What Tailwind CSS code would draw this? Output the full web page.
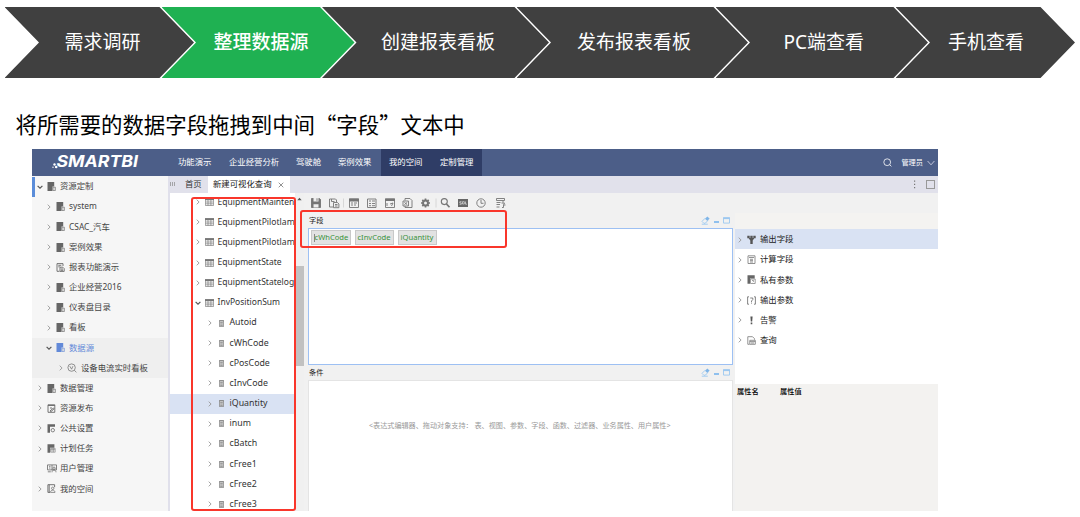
<!DOCTYPE html>
<html lang="zh-CN">
<head>
  <meta charset="UTF-8">
  <title>Smartbi</title>
  <script src="https://cdn.jsdelivr.net/npm/@tailwindcss/browser@4"></script>
</head>
<body class="w-[1080px] h-[517px] overflow-hidden bg-white font-['Noto_Sans','Noto_Sans_CJK_SC',sans-serif] text-[#333]">

  <!-- Icon sprite -->
  <svg class="hidden">
    <symbol id="right" viewBox="0 0 6 6"><path d="M1.7 .7 4.1 3 1.7 5.3" fill="none" stroke="#999" stroke-width=".9"/></symbol>
    <symbol id="down" viewBox="0 0 6 6"><path d="M.6 1.8 3 4.2 5.4 1.8" fill="none" stroke="#555" stroke-width="1.2"/></symbol>
    <symbol id="folder" viewBox="0 0 9 9"><path d="M.5 0h6.700v4.500H5.500V9H.5z" fill="currentColor"/><path d="M5.900 5.200h2.500v3.300H5.900z" fill="#ddd" stroke="currentColor" stroke-width=".6"/></symbol>
    <symbol id="report" viewBox="0 0 9 9"><path d="M1 8.300V.6h6v2.400M1 8.300h2.500M2.300 2.300h3M2.300 3.800h1.500M4 4.200h2.800l1.400 1.400v2.800H4zM5 6h2M5 7.300h2" fill="none" stroke="currentColor" stroke-width=".9"/></symbol>
    <symbol id="publish" viewBox="0 0 9 9"><path d="M1 8.300V.8h6.800v7.500zM1 1.500h6.800M3 4h2M3 7l3.400-3 .7.8-3 2.700z" fill="none" stroke="currentColor" stroke-width=".9"/></symbol>
    <symbol id="setting" viewBox="0 0 9 9"><path d="M.5.2h7.500v2.500H3v6H.5z" fill="currentColor"/><circle cx="5.800" cy="6.200" r="1.700" fill="none" stroke="currentColor" stroke-width=".8"/></symbol>
    <symbol id="plan" viewBox="0 0 9 9"><path d="M.5.2h6.900v3.500H3v5H.5z" fill="currentColor"/><path d="M3.500 4.400h4.700v3.800H3.500zM3.500 5.700h4.700M5 4.400v3.800M6.600 4.400v3.800" fill="none" stroke="currentColor" stroke-width=".5"/></symbol>
    <symbol id="users" viewBox="0 0 10 9"><path d="M.5.9h9v5h-9zM2 2.300h1.500M2 4h1.500M5 1v5M.8 7.800h3" fill="none" stroke="currentColor" stroke-width=".8"/><circle cx="7" cy="4.300" r="1.300" fill="#ccc" stroke="currentColor" stroke-width=".6"/><path d="M5 8.300c0-3 4-3 4 0" fill="none" stroke="currentColor" stroke-width=".7"/></symbol>
    <symbol id="space" viewBox="0 0 9 9"><path d="M3 8.400H.9V.7h6.700v2.500M2.200 .7v7.700" fill="none" stroke="currentColor" stroke-width=".9"/><circle cx="5.700" cy="4.300" r="1.200" fill="none" stroke="currentColor" stroke-width=".7"/><path d="M3.500 8.400c0-3 4.500-3 4.500 0z" fill="none" stroke="currentColor" stroke-width=".7"/></symbol>
    <symbol id="board" viewBox="0 0 10 10"><circle cx="4.600" cy="4.600" r="3.700" fill="none" stroke="currentColor" stroke-width=".8"/><path d="M2.800 3.200l1.800 3 1.300-3M7.300 7.300 9.400 9.300" fill="none" stroke="currentColor" stroke-width=".8"/></symbol>
    <symbol id="table" viewBox="0 0 9 8"><path d="M0 .2h9v2H0z" fill="#777"/><path d="M.4.5h8.200v7H.4zM3 2v5.500M5.900 2v5.500M.4 4h8.200M.4 5.800h8.200" fill="none" stroke="#777" stroke-width=".65"/></symbol>
    <symbol id="column" viewBox="0 0 5 7"><path d="M.4.4h4.200v6.200H.4z" fill="#ddd" stroke="#777" stroke-width=".7"/><path d="M.4 .9h4.200M1.200 2.600h2.600M1.200 4h2.600M1.200 5.400h2.600" stroke="#777" stroke-width=".7"/></symbol>
    <symbol id="eraser" viewBox="0 0 9 9"><path d="M4 2.700 6.300.5l2.300 2L6.400 5z" fill="#7fb5e8"/><path d="M4.200 2.200 1 5.400l2 2 1.600-.4 2.200-2.500M.8 8.200h6" fill="none" stroke="#9cc8f0" stroke-width=".9"/></symbol>
    <symbol id="max" viewBox="0 0 7 7"><path d="M.5.9h6v5.200h-6z" fill="none" stroke="#9cc8f0" stroke-width=".9"/><path d="M.1 .3h6.800v1.800H.1z" fill="#9cc8f0"/></symbol>
  </svg>

  <!-- Step bar -->
  <div class="flex h-[78px] pt-[7px] pl-[4.5px] text-[19px] leading-[71px] text-white whitespace-nowrap">
    <div class="w-[189.5px] h-[71px] shrink-0 pl-[60px] bg-[#404040] [clip-path:polygon(0_0,calc(100%_-_34.5px)_0,100%_50%,calc(100%_-_34.5px)_100%,0_100%,34.5px_50%)]">需求调研</div>
    <div class="w-[193px] h-[71px] shrink-0 -ml-[32.5px] pl-[52px] bg-[#1fb152] font-medium [clip-path:polygon(0_0,calc(100%_-_34.5px)_0,100%_50%,calc(100%_-_34.5px)_100%,0_100%,34.5px_50%)]">整理数据源</div>
    <div class="w-[227px] h-[71px] shrink-0 -ml-[32.5px] pl-[59px] bg-[#404040] [clip-path:polygon(0_0,calc(100%_-_34.5px)_0,100%_50%,calc(100%_-_34.5px)_100%,0_100%,34.5px_50%)]">创建报表看板</div>
    <div class="w-[231.5px] h-[71px] shrink-0 -ml-[32.5px] pl-[60.5px] bg-[#404040] [clip-path:polygon(0_0,calc(100%_-_34.5px)_0,100%_50%,calc(100%_-_34.5px)_100%,0_100%,34.5px_50%)]">发布报表看板</div>
    <div class="w-[212.5px] h-[71px] shrink-0 -ml-[32.5px] pl-[68px] bg-[#404040] [clip-path:polygon(0_0,calc(100%_-_34.5px)_0,100%_50%,calc(100%_-_34.5px)_100%,0_100%,34.5px_50%)]">PC端查看</div>
    <div class="w-[179.5px] h-[71px] shrink-0 -ml-[32.5px] pl-[52.5px] bg-[#404040] [clip-path:polygon(0_0,calc(100%_-_34.5px)_0,100%_50%,calc(100%_-_34.5px)_100%,0_100%,34.5px_50%)]">手机查看</div>
  </div>

  <h1 class="h-[71px] pl-[15.5px] pt-[30px] text-[21.4px] leading-[31px] text-black font-['Noto_Sans_CJK_SC',sans-serif] whitespace-nowrap">将所需要的数据字段拖拽到中间“字段”文本中</h1>

  <!-- Application window -->
  <div class="relative ml-8 w-[906px] h-[362px] flex flex-col overflow-hidden text-[8.4px] whitespace-nowrap">

    <!-- Top navigation -->
    <header class="flex h-[27px] shrink-0 items-center bg-[#4c5e88] text-white">
      <svg class="w-[110px] h-[27px] ml-[18px] shrink-0" viewBox="0 0 110 27">
        <text x="6.500" y="17.500" textLength="81.500" lengthAdjust="spacingAndGlyphs" font-family="Inter" font-size="16" font-weight="700" font-style="italic" fill="#fff">SMARTBI</text>
        <circle cx="4.500" cy="15.500" r="1.200" fill="#fff"/><circle cx="6.200" cy="18" r="1.300" fill="#fff"/><circle cx="3" cy="18.300" r=".7" fill="#fff"/>
      </svg>
      <span class="ml-[18px] w-[51px]">功能演示</span>
      <span class="w-[67px]">企业经营分析</span>
      <span class="w-[42px]">驾驶舱</span>
      <span class="w-[43px]">案例效果</span>
      <div class="flex h-full w-[101px] items-center bg-[#2f3d66] pl-2">
        <span class="w-[51px]">我的空间</span>
        <span>定制管理</span>
      </div>
      <svg class="ml-auto w-[9px] h-[9px]" viewBox="0 0 9 9"><path d="M6.700 6.700 8.400 8.400" stroke="#fff" stroke-width=".8"/><circle cx="4.200" cy="4.200" r="3.400" fill="none" stroke="#fff" stroke-width=".8"/></svg>
      <span class="ml-[9px] text-[7.2px]">管理员</span>
      <svg class="ml-1 mr-[3px] w-2 h-2" viewBox="0 0 8 8"><path d="M.6 2 4 5.800 7.400 2" fill="none" stroke="#dde" stroke-width=".8"/></svg>
    </header>

    <div class="flex grow min-h-0">
      <!-- Resource sidebar -->
      <aside class="w-[136px] shrink-0 bg-[#f6f6f6] pt-[0.5px] text-[#444]">
        <div class="flex h-[20.17px] items-center border-l-[3px] border-[#5b8dd9] pl-[2px]"><svg class="w-[6px] h-[6px]"><use href="#down"/></svg><svg class="ml-1 mr-[4px] w-[9px] h-[9px] text-[#666]"><use href="#folder"/></svg>资源定制</div>
        <div class="flex h-[20.17px] items-center pl-[14px]"><svg class="w-[6px] h-[6px]"><use href="#right"/></svg><svg class="ml-1 mr-[4px] w-[9px] h-[9px] text-[#666]"><use href="#folder"/></svg>system</div>
        <div class="flex h-[20.17px] items-center pl-[14px]"><svg class="w-[6px] h-[6px]"><use href="#right"/></svg><svg class="ml-1 mr-[4px] w-[9px] h-[9px] text-[#666]"><use href="#folder"/></svg>CSAC_汽车</div>
        <div class="flex h-[20.17px] items-center pl-[14px]"><svg class="w-[6px] h-[6px]"><use href="#right"/></svg><svg class="ml-1 mr-[4px] w-[9px] h-[9px] text-[#666]"><use href="#folder"/></svg>案例效果</div>
        <div class="flex h-[20.17px] items-center pl-[14px]"><svg class="w-[6px] h-[6px]"><use href="#right"/></svg><svg class="ml-1 mr-[4px] w-[9px] h-[9px] text-[#666]"><use href="#report"/></svg>报表功能演示</div>
        <div class="flex h-[20.17px] items-center pl-[14px]"><svg class="w-[6px] h-[6px]"><use href="#right"/></svg><svg class="ml-1 mr-[4px] w-[9px] h-[9px] text-[#666]"><use href="#folder"/></svg>企业经营2016</div>
        <div class="flex h-[20.17px] items-center pl-[14px]"><svg class="w-[6px] h-[6px]"><use href="#right"/></svg><svg class="ml-1 mr-[4px] w-[9px] h-[9px] text-[#666]"><use href="#folder"/></svg>仪表盘目录</div>
        <div class="flex h-[20.17px] items-center pl-[14px]"><svg class="w-[6px] h-[6px]"><use href="#right"/></svg><svg class="ml-1 mr-[4px] w-[9px] h-[9px] text-[#666]"><use href="#folder"/></svg>看板</div>
        <div class="flex h-[20.17px] items-center bg-[#efefef] pl-[14px] text-[#6289d8]"><svg class="w-[6px] h-[6px]"><use href="#down"/></svg><svg class="ml-1 mr-[4px] w-[9px] h-[9px]"><use href="#folder"/></svg>数据源</div>
        <div class="flex h-[20.17px] items-center bg-[#efefef] pl-[26px]"><svg class="w-[6px] h-[6px]"><use href="#right"/></svg><svg class="ml-[3px] mr-[4px] w-[10px] h-[10px] text-[#777]"><use href="#board"/></svg>设备电流实时看板</div>
        <div class="flex h-[20.17px] items-center pl-[5px]"><svg class="w-[6px] h-[6px]"><use href="#right"/></svg><svg class="ml-1 mr-[4px] w-[9px] h-[9px] text-[#666]"><use href="#folder"/></svg>数据管理</div>
        <div class="flex h-[20.17px] items-center pl-[5px]"><svg class="w-[6px] h-[6px]"><use href="#right"/></svg><svg class="ml-1 mr-[4px] w-[9px] h-[9px] text-[#666]"><use href="#publish"/></svg>资源发布</div>
        <div class="flex h-[20.17px] items-center pl-[5px]"><svg class="w-[6px] h-[6px]"><use href="#right"/></svg><svg class="ml-1 mr-[4px] w-[9px] h-[9px] text-[#666]"><use href="#setting"/></svg>公共设置</div>
        <div class="flex h-[20.17px] items-center pl-[5px]"><svg class="w-[6px] h-[6px]"><use href="#right"/></svg><svg class="ml-1 mr-[4px] w-[9px] h-[9px] text-[#666]"><use href="#plan"/></svg>计划任务</div>
        <div class="flex h-[20.17px] items-center pl-[15px]"><svg class="mr-[3px] w-[10px] h-[9px] text-[#666]"><use href="#users"/></svg>用户管理</div>
        <div class="flex h-[20.17px] items-center pl-[5px]"><svg class="w-[6px] h-[6px]"><use href="#right"/></svg><svg class="ml-1 mr-[4px] w-[9px] h-[9px] text-[#666]"><use href="#space"/></svg>我的空间</div>
      </aside>

      <div class="flex grow flex-col min-w-0 border-l-2 border-[#e0e0eb]">
        <!-- Tabs -->
        <div class="flex h-[17px] shrink-0 items-center bg-[#e1e1eb]">
          <svg class="w-[5px] h-[5px] mr-[10px]" viewBox="0 0 5 5"><path d="M.5 0v4M2.500 0v4M4.500 0v4" stroke="#888" stroke-width=".7"/></svg>
          <span class="w-[23px]">首页</span>
          <div class="flex h-full w-[82px] items-center bg-white pl-[5px] text-[#222]">
            <span>新建可视化查询</span>
            <svg class="ml-[6px] w-[6px] h-[6px]" viewBox="0 0 6 6"><path d="M.7.7l4.600 4.600M5.300.7.7 5.300" stroke="#777" stroke-width=".8"/></svg>
          </div>
          <svg class="ml-auto w-[3px] h-[9px] mr-[10px]" viewBox="0 0 3 9"><path d="M1 .5h1.200v1.200H1zM1 3.800h1.200V5H1zM1 7.100h1.200v1.200H1z" fill="#777"/></svg>
          <div class="mr-[3px] h-[9px] w-[9px] border border-[#999]"></div>
        </div>

        <div class="flex grow min-h-0">
          <!-- Table tree -->
          <div class="w-[125px] shrink-0 overflow-hidden bg-white text-[8.8px]">
            <div class="-mt-px">
              <div class="flex h-[20.17px] items-center pl-[25px]"><svg class="w-[6px] h-[6px] shrink-0"><use href="#right"/></svg><svg class="ml-1 mr-[3.5px] w-[9px] h-[8px] shrink-0"><use href="#table"/></svg><span class="text-[8.5px]">EquipmentMainten</span></div>
              <div class="flex h-[20.17px] items-center pl-[25px]"><svg class="w-[6px] h-[6px] shrink-0"><use href="#right"/></svg><svg class="ml-1 mr-[3.5px] w-[9px] h-[8px] shrink-0"><use href="#table"/></svg><span class="text-[8.6px]">EquipmentPilotlam</span></div>
              <div class="flex h-[20.17px] items-center pl-[25px]"><svg class="w-[6px] h-[6px] shrink-0"><use href="#right"/></svg><svg class="ml-1 mr-[3.5px] w-[9px] h-[8px] shrink-0"><use href="#table"/></svg><span class="text-[8.6px]">EquipmentPilotlam</span></div>
              <div class="flex h-[20.17px] items-center pl-[25px]"><svg class="w-[6px] h-[6px] shrink-0"><use href="#right"/></svg><svg class="ml-1 mr-[3.5px] w-[9px] h-[8px] shrink-0"><use href="#table"/></svg><span class="text-[8.5px]">EquipmentState</span></div>
              <div class="flex h-[20.17px] items-center pl-[25px]"><svg class="w-[6px] h-[6px] shrink-0"><use href="#right"/></svg><svg class="ml-1 mr-[3.5px] w-[9px] h-[8px] shrink-0"><use href="#table"/></svg><span class="text-[8.5px]">EquipmentStatelog</span></div>
              <div class="flex h-[20.17px] items-center pl-[25px]"><svg class="w-[6px] h-[6px] shrink-0"><use href="#down"/></svg><svg class="ml-1 mr-[3.5px] w-[9px] h-[8px] shrink-0"><use href="#table"/></svg><span class="text-[8.5px]">InvPositionSum</span></div>
              <div class="flex h-[20.17px] items-center pl-[37px]"><svg class="w-[6px] h-[6px]"><use href="#right"/></svg><svg class="ml-[6px] mr-[5.5px] w-[5px] h-[7px]"><use href="#column"/></svg>Autoid</div>
              <div class="flex h-[20.17px] items-center pl-[37px]"><svg class="w-[6px] h-[6px]"><use href="#right"/></svg><svg class="ml-[6px] mr-[5.5px] w-[5px] h-[7px]"><use href="#column"/></svg>cWhCode</div>
              <div class="flex h-[20.17px] items-center pl-[37px]"><svg class="w-[6px] h-[6px]"><use href="#right"/></svg><svg class="ml-[6px] mr-[5.5px] w-[5px] h-[7px]"><use href="#column"/></svg>cPosCode</div>
              <div class="flex h-[20.17px] items-center pl-[37px]"><svg class="w-[6px] h-[6px]"><use href="#right"/></svg><svg class="ml-[6px] mr-[5.5px] w-[5px] h-[7px]"><use href="#column"/></svg>cInvCode</div>
              <div class="flex h-[20.17px] items-center bg-[#d9e2f3] pl-[37px]"><svg class="w-[6px] h-[6px]"><use href="#right"/></svg><svg class="ml-[6px] mr-[5.5px] w-[5px] h-[7px]"><use href="#column"/></svg>iQuantity</div>
              <div class="flex h-[20.17px] items-center pl-[37px]"><svg class="w-[6px] h-[6px]"><use href="#right"/></svg><svg class="ml-[6px] mr-[5.5px] w-[5px] h-[7px]"><use href="#column"/></svg>inum</div>
              <div class="flex h-[20.17px] items-center pl-[37px]"><svg class="w-[6px] h-[6px]"><use href="#right"/></svg><svg class="ml-[6px] mr-[5.5px] w-[5px] h-[7px]"><use href="#column"/></svg>cBatch</div>
              <div class="flex h-[20.17px] items-center pl-[37px]"><svg class="w-[6px] h-[6px]"><use href="#right"/></svg><svg class="ml-[6px] mr-[5.5px] w-[5px] h-[7px]"><use href="#column"/></svg>cFree1</div>
              <div class="flex h-[20.17px] items-center pl-[37px]"><svg class="w-[6px] h-[6px]"><use href="#right"/></svg><svg class="ml-[6px] mr-[5.5px] w-[5px] h-[7px]"><use href="#column"/></svg>cFree2</div>
              <div class="flex h-[20.17px] items-center pl-[37px]"><svg class="w-[6px] h-[6px]"><use href="#right"/></svg><svg class="ml-[6px] mr-[5.5px] w-[5px] h-[7px]"><use href="#column"/></svg>cFree3</div>
            </div>
          </div>

          <!-- Scrollbar -->
          <div class="flex w-[9px] shrink-0 flex-col items-center bg-[#f0f0f0] pt-[4px]">
            <svg class="w-[5px] h-[4px] shrink-0" viewBox="0 0 5 4"><path d="M.3 3.200 2.500.7l2.200 2.500z" fill="#555"/></svg>
            <div class="mt-[65px] h-[100px] w-[8px] bg-[#c1c1c1]"></div>
          </div>

          <!-- Editor -->
          <div class="flex grow flex-col min-w-0 bg-[#f1f1f1]">
            <div class="flex h-[20px] shrink-0 items-center pl-[7px] text-[#757575]">
              <svg class="w-[200px] h-[12px]" viewBox="311 0 200 12" fill="none" stroke="currentColor" stroke-width=".9">
                <path d="M311.500 1.500h8l1 1v8h-9z" fill="currentColor"/><path d="M313.500 1h5v3.600h-5zM313.500 7.200h5v3.300h-5z" fill="#eee" stroke="none"/><path d="M317 1.300v2.500"/>
                <path d="M333 10H329.500V2h6l1 1v2M331.500 2v2.500h3M333.500 5.500h4l1.400 1.500v3.700h-5.400zM335 7.500h2.500M335 9h2.500"/>
                <path d="M343.500 1.500v9M436 1.500v9" stroke="#d4d4d4"/>
                <path d="M349.500 2h9v8.500h-9zM351 6h2M351 8h2M354 6h3M354 8h2"/><path d="M349 1.500h10v3h-10z" fill="currentColor" stroke="none"/>
                <path d="M367.500 2h8.500v8.500h-8.500zM369 4h2M372 4h3M369 6.500h2M372 6.500h3M369 8.700h2M372 8.700h3"/>
                <path d="M385.500 2h9v8.500h-9zM387 6v3M390 7l3-1-1.500 3"/><path d="M385 1.500h10v2.500h-10z" fill="currentColor" stroke="none"/>
                <path d="M405 3.500v-2h5l2 2v7h-7v-1.500M403 4h5.500v5h-5.500zM404.300 5.200l3 2.600M407.300 5.200l-3 2.600"/>
                <circle cx="425.500" cy="6" r="2.500" stroke-width="2"/><path d="M425.500 1.500v1.500M425.500 9v1.500M421 6h1.500M428.500 6h1.500M422.300 2.800l1 1M427.700 8.200l1 1M428.700 2.800l-1 1M423.300 8.200l-1 1" stroke-width="1.700"/>
                <circle cx="444.300" cy="4.600" r="3" stroke-width="1.100"/><path d="M446.500 7l3 3.300" stroke-width="1.700"/>
                <path d="M458 2h10v8h-10z" fill="#666" stroke="none"/><path d="M461.500 4.700h-1.700v1.300h1.500v1.300h-1.800M462.500 4.700h1.800v2.300h-1.800zM465.500 4.500V7.200h1.500" stroke="#ddd" stroke-width=".7"/>
                <circle cx="481" cy="6" r="4.200"/><path d="M481 3v3.300h2.500"/>
                <path d="M496.500 1.500h8v2h-8zM496.500 5.500h4M496.500 7.500h3.500M496.500 10h3M503 4v1.500M501.500 6h3l-1 2v2.500h-1.500M504 8h1.500"/>
              </svg>
            </div>

            <div class="flex grow min-h-0">
              <div class="flex w-[429px] shrink-0 flex-col pl-[4px]">
                <!-- Fields -->
                <div class="flex h-[15px] shrink-0 items-center text-[7.2px] text-[#222]">
                  <span class="mr-auto pl-px">字段</span>
                  <svg class="w-[9px] h-[9px]"><use href="#eraser"/></svg>
                  <div class="mx-[4px] mt-[3px] h-[1.5px] w-[5px] bg-[#8fc0ee]"></div>
                  <svg class="mr-[3px] w-[7px] h-[7px]"><use href="#max"/></svg>
                </div>
                <div class="flex h-[137px] shrink-0 items-start gap-[4px] border border-[#9dc0f3] bg-white pt-[1px] pl-[1.5px] text-[7.6px] leading-[13px] text-[#38923a]">
                  <span class="flex w-[40px] items-center border border-[#c9c9c9] bg-[#e2e2e2] pl-[2px]"><i class="h-[8px] w-px bg-[#888]"></i>cWhCode</span>
                  <span class="w-[39px] border border-[#c9c9c9] bg-[#e2e2e2] text-center">cInvCode</span>
                  <span class="w-[39px] border border-[#c9c9c9] bg-[#e2e2e2] text-center">iQuantity</span>
                </div>
                <!-- Conditions -->
                <div class="flex h-[15px] shrink-0 items-center text-[7.2px] text-[#222]">
                  <span class="mr-auto pl-px">条件</span>
                  <svg class="w-[9px] h-[9px]"><use href="#eraser"/></svg>
                  <div class="mx-[4px] mt-[3px] h-[1.5px] w-[5px] bg-[#8fc0ee]"></div>
                  <svg class="mr-[3px] w-[7px] h-[7px]"><use href="#max"/></svg>
                </div>
                <div class="grow border border-b-0 border-[#e4e4e4] bg-white pt-[38px] pl-[60px] text-[7.12px] leading-[12px] text-[#999]">&lt;表达式编辑器、拖动对象支持： 表、视图、参数、字段、函数、过滤器、业务属性、用户属性&gt;</div>
              </div>

              <!-- Output panel -->
              <div class="ml-[2px] flex grow flex-col">
                <div class="h-[16px] shrink-0 bg-[#f4f3f1]"></div>
                <div class="h-[155px] shrink-0 bg-white text-[#222]">
                  <div class="flex h-[20.17px] items-center bg-[#d9e2f3] pt-px pl-[2px]"><svg class="w-[6px] h-[6px]"><use href="#right"/></svg><svg class="ml-[4px] mr-[4px] w-[9px] h-[9px]" viewBox="0 0 9 9"><path d="M.3.800h2.400v2.500H.3zM3.300.800h2.400v2.500H3.300zM6.300.800h2.400v2.500H6.300zM1.500 3h6L5.700 5.500V9h-2.400V5.500z" fill="#555"/></svg>输出字段</div>
                  <div class="flex h-[20.17px] items-center pt-px pl-[2px]"><svg class="w-[6px] h-[6px]"><use href="#right"/></svg><svg class="ml-[4px] mr-[4px] w-[9px] h-[9px]" viewBox="0 0 9 9"><path d="M1 .8h7v7.700H1zM2 2.500h5M3 4.300h3M3 5.600h3M3 7h3" fill="none" stroke="#777" stroke-width=".8"/></svg>计算字段</div>
                  <div class="flex h-[20.17px] items-center pt-px pl-[2px]"><svg class="w-[6px] h-[6px]"><use href="#right"/></svg><svg class="ml-[4px] mr-[4px] w-[9px] h-[9px]" viewBox="0 0 9 9"><path d="M.5.2h7.200v3.300H3v5.300H.5z" fill="#666"/><path d="M3.500 4h4.700v4.500H3.500zM5 5.500h1.500v1L5.800 7" fill="none" stroke="#777" stroke-width=".7"/></svg>私有参数</div>
                  <div class="flex h-[20.17px] items-center pt-px pl-[2px]"><svg class="w-[6px] h-[6px]"><use href="#right"/></svg><svg class="ml-[4px] mr-[4px] w-[9px] h-[9px]" viewBox="0 0 9 9"><path d="M2 .8H.6v7.400H2M7 .8h1.400v7.400H7M3.200 2h2.600v1.500L4.500 5v1M4.500 6.600v1" fill="none" stroke="#666" stroke-width=".8"/></svg>输出参数</div>
                  <div class="flex h-[20.17px] items-center pt-px pl-[2px]"><svg class="w-[6px] h-[6px]"><use href="#right"/></svg><svg class="ml-[4px] mr-[4px] w-[9px] h-[9px]" viewBox="0 0 9 9"><path d="M3.400 .6h2.200l-.4 5H3.800zM3.700 6.600h1.600v1.700H3.700z" fill="#555"/></svg>告警</div>
                  <div class="flex h-[20.17px] items-center pt-px pl-[2px]"><svg class="w-[6px] h-[6px]"><use href="#right"/></svg><svg class="ml-[4px] mr-[4px] w-[9px] h-[9px]" viewBox="0 0 9 9"><path d="M2.500 8.300H.8V.7h4.700l2 2v1M2.800 4.300h5.500v4H2.800zM2.800 5.600h5.500M4 7h3" fill="none" stroke="#777" stroke-width=".8"/></svg>查询</div>
                </div>
                <div class="flex grow bg-[#f3f2f0] pt-[2px] pl-[2px] text-[7.2px] leading-[11px] font-medium text-black">
                  <span class="w-[43px]">属性名</span>
                  <span>属性值</span>
                </div>
              </div>
            </div>
          </div>
        </div>
      </div>
    </div>

    <!-- Callout frames over the tree and the field list -->
    <div class="absolute left-[159px] top-[48px] h-[314px] w-[105px] rounded-[3px] border-2 border-[#f9362b]"></div>
    <div class="absolute left-[268px] top-[61px] h-[38px] w-[207px] rounded-[3px] border-2 border-[#f9362b]"></div>
  </div>
</body>
</html>
